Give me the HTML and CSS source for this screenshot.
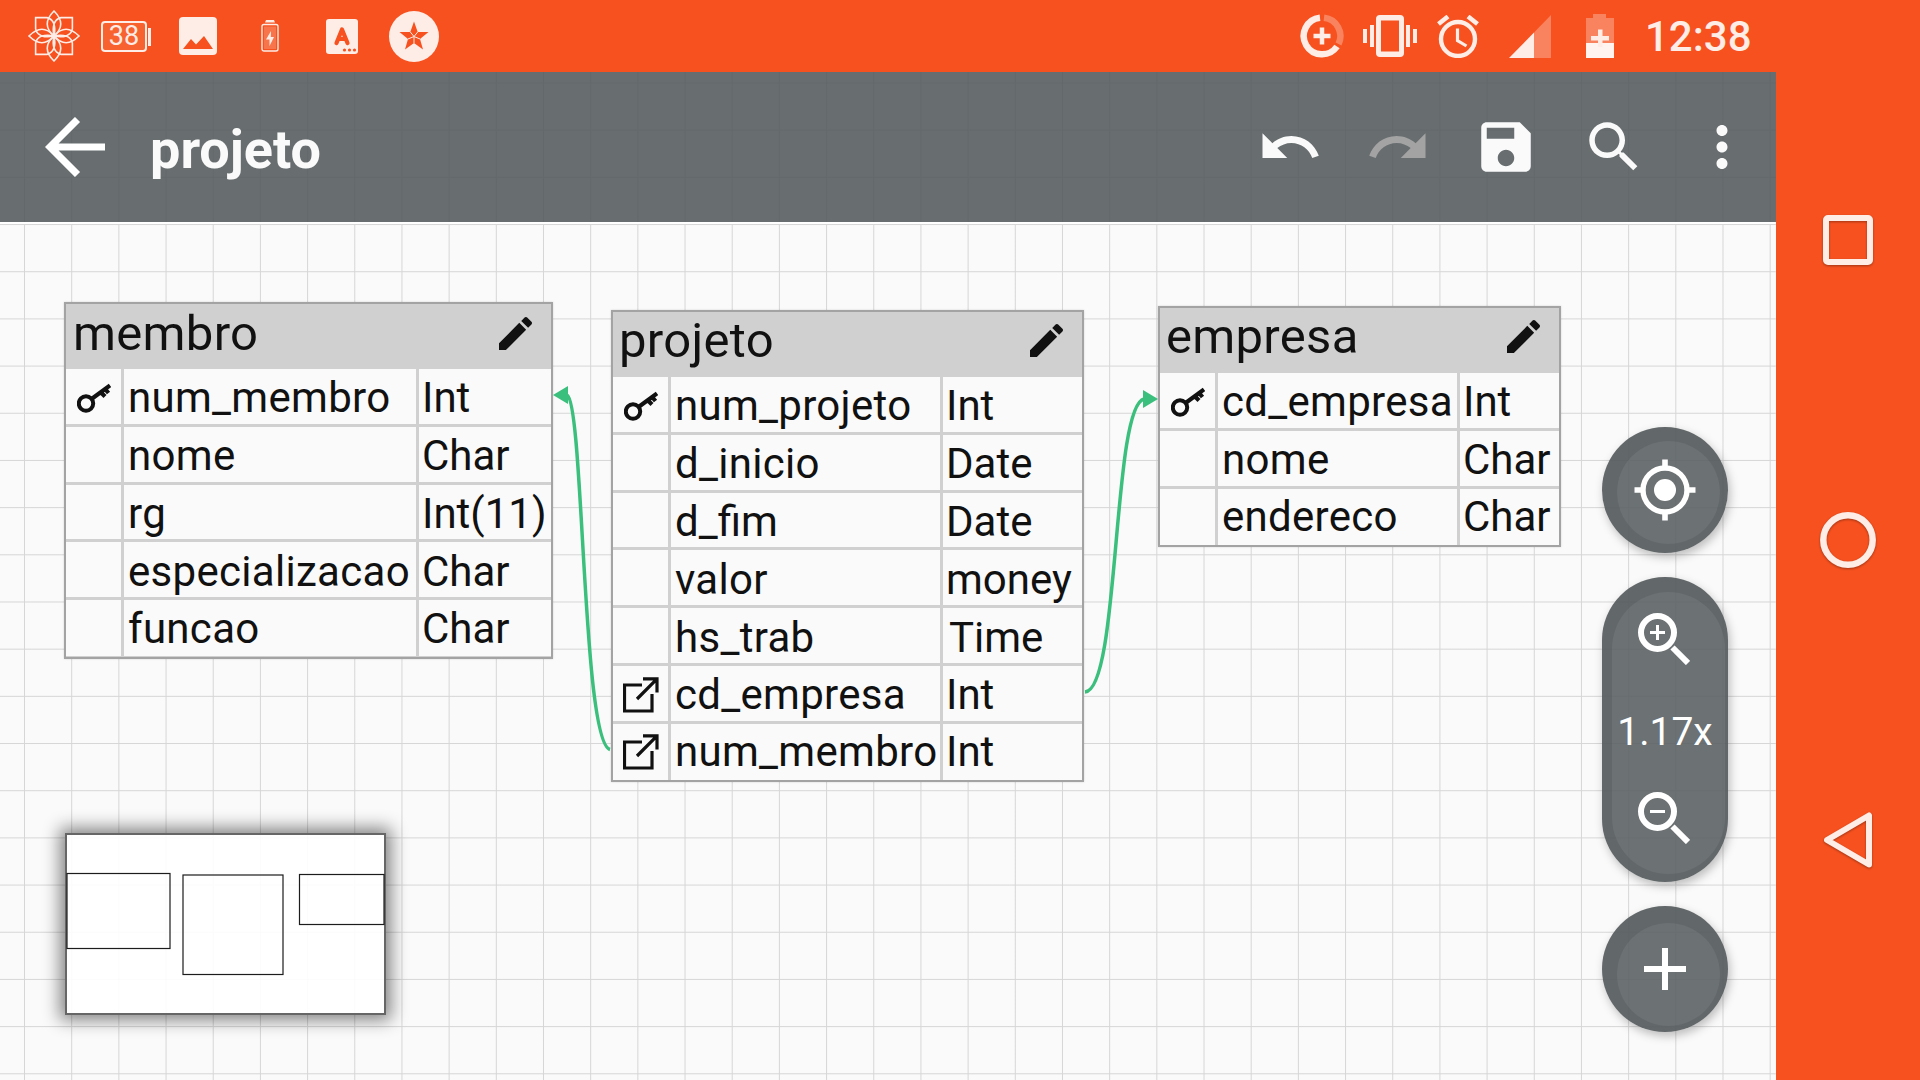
FILE: index.html
```html
<!DOCTYPE html>
<html lang="pt-BR">
<head>
<meta charset="utf-8">
<title>projeto</title>
<link rel="stylesheet" href="styles.css">
</head>
<body>
<main class="screen">
  <header class="status">
    <div class="notices">
      <svg class="n-flower" width="52" height="52" viewBox="-26 -26 52 52" fill="none" stroke="#feece6" stroke-width="1.6">
        <defs>
          <path id="petal" d="M0 0C-9 -8 -9 -16 0 -25C9 -16 9 -8 0 0Z"/>
          <path id="petal2" d="M0 0C-8 -5 -12 -12 -8 -18L0 -26L8 -18C12 -12 8 -5 0 0Z"/>
        </defs>
        <use href="#petal"/><use href="#petal" transform="rotate(90)"/><use href="#petal" transform="rotate(180)"/><use href="#petal" transform="rotate(270)"/>
        <use href="#petal2" transform="rotate(45)"/><use href="#petal2" transform="rotate(135)"/><use href="#petal2" transform="rotate(225)"/><use href="#petal2" transform="rotate(315)"/>
        <circle r="2" fill="#feece6"/>
      </svg>
      <div class="n-level"><span>38</span></div>
      <svg class="n-photo" width="38" height="38" viewBox="0 0 38 38"><rect width="38" height="38" rx="4" fill="#feece6"/><path d="M4 32L12 22L17 27.500L25 19L34 32Z" fill="#f6511f"/></svg>
      <svg class="n-charge" width="18" height="32" viewBox="0 0 18 32"><path d="M4 2.500L5 0H13L14 2.500Z" fill="#feece6"/><rect x="1" y="4.500" width="16" height="26.500" rx="2" fill="none" stroke="#feece6" stroke-width="1.400"/><rect x="3" y="6.500" width="12" height="22.500" fill="#f8754c"/><path d="M10 11L5 19.500H8.500V26L13 17H9.800Z" fill="#feece6"/></svg>
      <svg class="n-letter" width="32" height="35" viewBox="0 0 32 35"><rect width="32" height="35" rx="3" fill="#feece6"/><path d="M10.500 24L16 10.500L21.500 24M12.500 20H19.500" fill="none" stroke="#f6511f" stroke-width="4.200" stroke-linecap="round" stroke-linejoin="round"/><g fill="#f6511f"><circle cx="18.500" cy="31" r="1.600"/><circle cx="23.500" cy="31" r="1.600"/><circle cx="28.500" cy="31" r="1.600"/></g></svg>
      <svg class="n-star" width="50" height="51" viewBox="-25 -25.500 50 51"><ellipse rx="25" ry="25.500" fill="#feece6"/><path d="M0 -15L3.700 -4.500H14.500L6 2.500L9 13L0 6.500L-9 13L-6 2.500L-14.500 -4.500H-3.700Z" fill="#f6511f"/><path d="M0 0L3.700 -4.500M0 0L6 2.500M0 0V6.500M0 0L-6 2.500M0 0L-3.700 -4.500" stroke="#feece6" stroke-width="1"/></svg>
    </div>
    <div class="system">
      <svg class="s-data" width="44" height="44" viewBox="-22 -22 44 44" fill="none" stroke-width="6.500"><path d="M-2 -18.200A18.300 18.300 0 1 0 15 10.500" stroke="#feece6"/><path d="M2 -18.200A18.300 18.300 0 0 1 16.500 8" stroke="#f9835e"/><path d="M0 -8.500V8.500M-8.500 0H8.500" stroke="#feece6" stroke-width="4.500"/></svg>
      <svg class="s-vibrate" width="54" height="42" viewBox="0 0 54 42" fill="#feece6"><path fill-rule="evenodd" d="M17 0H37Q41 0 41 4V38Q41 42 37 42H17Q13 42 13 38V4Q13 0 17 0ZM18 5.500V36.500H36V5.500Z"/><path d="M0 14H4V28H0ZM7 10H11V32H7ZM43 10H47V32H43ZM50 14H54V28H50Z"/></svg>
      <svg class="s-alarm" width="42" height="43" viewBox="0 0 42 43" fill="none" stroke="#feece6"><circle cx="21" cy="24" r="17" stroke-width="4.400"/><path d="M20.500 13.500V25.500L29.500 31" stroke-width="3.200"/><path d="M1.500 9L11 1.500M31 1.500L40.500 9" stroke-width="4.600"/></svg>
      <svg class="s-signal" width="42" height="43" viewBox="0 0 42 43"><path d="M42 0V43H25V17.500Z" fill="#f9835e"/><path d="M0 43H25V17.500Z" fill="#feece6"/></svg>
      <svg class="s-battery" width="28" height="44" viewBox="0 0 28 44"><path d="M7 0H20V4H28V44H0V4H7Z" fill="#f9835e"/><path d="M0 29H28V44H0Z" fill="#fff4f0"/><path d="M12 15.500H16.500V22H23V26.500H16.500V33H12V26.500H5V22H12Z" fill="#feece6"/></svg>
      <time class="clock">12:38</time>
    </div>
  </header>

  <nav class="appbar">
    <svg class="back" width="60" height="60" viewBox="0 0 60 60" fill="none" stroke="#fff" stroke-width="7.200"><path d="M60 30H5M32.500 2.500L5 30L32.500 57.500"/></svg>
    <h1>projeto</h1>
    <div class="actions">
      <svg width="66" height="66" viewBox="0 0 24 24" fill="#fafafa"><path d="M12.500 8c-2.650 0-5.050.99-6.900 2.600L2 7v9h9l-3.620-3.620c1.390-1.160 3.160-1.880 5.120-1.880 3.540 0 6.550 2.310 7.600 5.500l2.370-.78C21.080 11.030 17.150 8 12.500 8z"/></svg>
      <svg width="66" height="66" viewBox="0 0 24 24" fill="#a3a3a3"><path d="M18.400 10.600C16.550 8.990 14.150 8 11.500 8c-4.650 0-8.580 3.030-9.960 7.220L3.900 16c1.050-3.190 4.050-5.500 7.600-5.500 1.950 0 3.730.72 5.120 1.880L13 16h9V7l-3.600 3.600z"/></svg>
      <svg width="66" height="66" viewBox="0 0 24 24" fill="#fafafa"><path d="M17 3H5c-1.110 0-2 .9-2 2v14c0 1.100.89 2 2 2h14c1.100 0 2-.9 2-2V7l-4-4zm-5 16c-1.660 0-3-1.340-3-3s1.340-3 3-3 3 1.340 3 3-1.340 3-3 3zm3-10H5V5h10v4z"/></svg>
      <svg width="66" height="66" viewBox="0 0 24 24" fill="#fafafa"><path d="M15.500 14h-.79l-.28-.27C15.410 12.590 16 11.110 16 9.500 16 5.910 13.090 3 9.500 3S3 5.910 3 9.500 5.910 16 9.500 16c1.610 0 3.090-.59 4.230-1.570l.27.28v.79l5 4.990L20.490 19l-4.990-5zm-6 0C7.010 14 5 11.990 5 9.500S7.010 5 9.500 5 14 7.010 14 9.500 11.990 14 9.500 14z"/></svg>
      <svg width="66" height="66" viewBox="0 0 24 24" fill="#fafafa"><path d="M12 8c1.100 0 2-.9 2-2s-.9-2-2-2-2 .9-2 2 .9 2 2 2zm0 2c-1.100 0-2 .9-2 2s.9 2 2 2 2-.9 2-2-.9-2-2-2zm0 6c-1.100 0-2 .9-2 2s.9 2 2 2 2-.9 2-2-.9-2-2-2z"/></svg>
    </div>
  </nav>

  <section class="canvas">
    <svg class="links" width="1776" height="858" viewBox="0 222 1776 858" fill="none" stroke="#3abf7c" stroke-width="3.500">
      <path d="M610 749.500C582 742 584 404 567 395"/><path d="M553 395L568 386V404Z" fill="#3abf7c" stroke="none"/>
      <path d="M1085 692C1120 690 1112 406 1144 399"/><path d="M1158 399L1143 390V408Z" fill="#3abf7c" stroke="none"/>
    </svg>

    <svg class="symbols" width="0" height="0">
      <symbol id="pencil" viewBox="3 3 18 18"><path fill="#111" d="M3 17.250V21h3.750L17.810 9.940l-3.750-3.750L3 17.250zM20.710 7.040c.39-.39.39-1.020 0-1.410l-2.340-2.340c-.39-.39-1.020-.39-1.410 0l-1.830 1.830 3.750 3.750 1.830-1.830z"/></symbol>
      <symbol id="key" viewBox="0 0 34 30"><circle cx="9" cy="20.500" r="7.200" fill="none" stroke="#111" stroke-width="4"/><path d="M14.500 16L33 2.500M24 9.500L28 13.500M28.500 6.500L31.500 10" fill="none" stroke="#111" stroke-width="4.200"/></symbol>
      <symbol id="foreign" viewBox="0 0 36 36"><path d="M19 8H1.500V34H29V17M20 1.800H34V15.500M34 1.800L14 22" fill="none" stroke="#111" stroke-width="3.200"/></symbol>
    </svg>

    <article class="table membro">
      <h2>membro<svg class="pencil"><use href="#pencil"/></svg></h2>
      <div class="rows">
        <i><svg class="key"><use href="#key"/></svg></i><span>num_membro</span><b>Int</b>
        <i></i><span>nome</span><b>Char</b>
        <i></i><span>rg</span><b>Int(11)</b>
        <i></i><span>especializacao</span><b>Char</b>
        <i></i><span>funcao</span><b>Char</b>
      </div>
    </article>
    <article class="table projeto">
      <h2>projeto<svg class="pencil"><use href="#pencil"/></svg></h2>
      <div class="rows">
        <i><svg class="key"><use href="#key"/></svg></i><span>num_projeto</span><b>Int</b>
        <i></i><span>d_inicio</span><b>Date</b>
        <i></i><span class="ligature">d_fim</span><b>Date</b>
        <i></i><span>valor</span><b>money</b>
        <i></i><span>hs_trab</span><b class="inset">Time</b>
        <i><svg class="foreign"><use href="#foreign"/></svg></i><span>cd_empresa</span><b>Int</b>
        <i><svg class="foreign"><use href="#foreign"/></svg></i><span>num_membro</span><b>Int</b>
      </div>
    </article>
    <article class="table empresa">
      <h2>empresa<svg class="pencil"><use href="#pencil"/></svg></h2>
      <div class="rows">
        <i><svg class="key"><use href="#key"/></svg></i><span>cd_empresa</span><b>Int</b>
        <i></i><span>nome</span><b>Char</b>
        <i></i><span>endereco</span><b>Char</b>
      </div>
    </article>

    <svg class="minimap" viewBox="67 835 317 178" fill="none" stroke="#1c1c1c" stroke-width="1.200">
      <rect x="67" y="873.500" width="103" height="75"/><rect x="183" y="875" width="100" height="99.500"/><rect x="299.500" y="874.500" width="84.500" height="50"/>
    </svg>

    <div class="controls">
      <button class="round"><svg width="62" height="62" viewBox="0 0 62 62" fill="none" stroke="#fff"><circle cx="31" cy="31" r="22" stroke-width="5.400"/><circle cx="31" cy="31" r="11" fill="#fff" stroke="none"/><path d="M31 .5V8M31 54V61.500M.5 31H8M54 31H61.500" stroke-width="5.600"/></svg></button>
      <div class="pill">
        <svg width="52" height="52" viewBox="0 0 52 52" fill="none" stroke="#fff"><circle cx="19.500" cy="19.500" r="16.500" stroke-width="6"/><path d="M34.500 34.500L50 50" stroke-width="6"/><path d="M12 19.500H27M19.500 12V27" stroke-width="3"/></svg>
        <span>1.17x</span>
        <svg width="52" height="52" viewBox="0 0 52 52" fill="none" stroke="#fff"><circle cx="19.500" cy="19.500" r="16.500" stroke-width="6"/><path d="M34.500 34.500L50 50" stroke-width="6"/><path d="M12 19.500H27" stroke-width="3"/></svg>
      </div>
      <button class="round add"><svg width="42" height="42" viewBox="0 0 42 42" stroke="#fff" stroke-width="6"><path d="M21 0V42M0 21H42"/></svg></button>
    </div>
  </section>
</main>

<aside class="navbar">
  <svg width="60" height="60" viewBox="0 0 60 60" fill="none" stroke="#feece6" stroke-width="6"><rect x="8" y="8" width="44" height="44" rx="2"/></svg>
  <svg width="60" height="60" viewBox="0 0 60 60" fill="none" stroke="#feece6" stroke-width="6.500"><circle cx="30" cy="30" r="24.700"/></svg>
  <svg width="60" height="60" viewBox="0 0 60 60" fill="none" stroke="#feece6" stroke-width="6" stroke-linejoin="round"><path d="M51 5.500V54.500L9 30Z"/></svg>
</aside>
</body>
</html>
```

FILE: styles.css
```css
* { box-sizing: border-box; }
body {
  margin: 0;
  width: 1920px;
  height: 1080px;
  overflow: hidden;
  display: flex;
  font-family: Roboto, "Liberation Sans", sans-serif;
}
svg { display: block; flex: none; }

.screen {
  width: 1776px;
  display: flex;
  flex-direction: column;
  background-color: #fafafa;
  background-image:
    repeating-linear-gradient(90deg, #d6d6d6 0, transparent 1px, transparent 46.18px, #d6d6d6 47.18px),
    repeating-linear-gradient(180deg, #d6d6d6 0, transparent 1px, transparent 46.18px, #d6d6d6 47.18px);
  background-position: -22.68px 0, 0 -11.36px;
  background-size: 1900px 1200px;
}

.status {
  height: 72px;
  background: #f6511f;
  color: #feece6;
  display: flex;
  justify-content: space-between;
  align-items: center;
  padding: 0 24px 0 28px;
}
.notices, .system { display: flex; align-items: center; }
.n-level {
  width: 46px;
  height: 31px;
  margin: 0 5px 0 21px;
  border: 2px solid #feece6;
  border-radius: 4px;
  background: #f7622f;
  display: flex;
  align-items: center;
  justify-content: center;
  position: relative;
  font-size: 27px;
}
.n-level::after {
  content: "";
  position: absolute;
  left: 45px;
  top: 5px;
  width: 3px;
  height: 18px;
  background: #feece6;
}
.n-photo { margin-left: 27px; }
.n-charge { margin-left: 44px; }
.n-letter { margin-left: 47px; }
.n-star { margin-left: 31px; }
.s-vibrate { margin-left: 19px; }
.s-alarm { margin-left: 20px; }
.s-signal { margin-left: 30px; }
.s-battery { margin-left: 35px; }
.clock {
  margin-left: 31px;
  width: 107px;
  font-size: 42px;
  font-weight: 500;
  white-space: nowrap;
}

.appbar {
  height: 150px;
  background: rgba(83, 90, 92, 0.88);
  display: flex;
  align-items: center;
  padding: 0 21px 0 45px;
  box-shadow: 0 2px 0 #fff;
}
.appbar h1 {
  margin: 4px 0 0 45px;
  color: #fafafa;
  font-size: 54px;
  font-weight: 700;
}
.actions { margin-left: auto; display: flex; align-items: center; gap: 42px; }

.canvas { flex: 1; position: relative; }
.links, .symbols { position: absolute; left: 0; top: 0; }

.table {
  position: absolute;
  border: 2px solid #a3a3a3;
  background: #d0d0d0;
  box-shadow: 0 0 2px rgba(0, 0, 0, 0.15);
  color: #111;
  display: flex;
  flex-direction: column;
}
.membro { left: 64px; top: 80px; width: 489px; height: 357px; --name: 292px; }
.projeto { left: 611px; top: 88px; width: 473px; height: 472px; --name: 269px; }
.empresa { left: 1158px; top: 84px; width: 403px; height: 241px; --name: 239px; }
.table h2 {
  margin: 0;
  height: 65px;
  padding: 0 19px 7px 7px;
  display: flex;
  flex: none;
  align-items: center;
  justify-content: space-between;
  font-size: 49px;
  font-weight: 400;
  letter-spacing: 0.3px;
}
.projeto h2, .empresa h2 { padding: 0 19px 9px 6px; }
.pencil { width: 33px; height: 33px; }
.rows {
  flex: 1;
  min-height: 0;
  display: grid;
  grid-template-columns: 55px var(--name) 1fr;
  grid-auto-rows: 54.800px;
  gap: 3px;
}
.rows > * { background: #fafafa; display: flex; align-items: center; }
.rows > :nth-last-child(-n+3) { margin-bottom: -1.400px; }
.rows i { padding: 3px 0 0 11px; }
.rows span, .rows b {
  padding: 4px 0 0 4px;
  font-size: 42px;
  font-weight: 400;
  line-height: 50px;
  white-space: nowrap;
}
.rows > :nth-last-child(-n+3) { padding-top: 1px; }
.rows b { padding-left: 3px; }
.rows span { letter-spacing: 0.3px; }
.rows .ligature { letter-spacing: 0; }
.rows .inset { padding-left: 6px; }
.key { width: 34px; height: 30px; }
.foreign { width: 36px; height: 36px; margin-left: -1px; }

.minimap {
  position: absolute;
  left: 65px;
  top: 611px;
  width: 321px;
  height: 182px;
  overflow: visible;
  background: rgba(255, 255, 255, 0.9);
  border: 2px solid #666;
  box-shadow: 0 0 16px 5px rgba(0, 0, 0, 0.48);
}

.controls {
  position: absolute;
  right: 48px;
  top: 205px;
  width: 126px;
  display: flex;
  flex-direction: column;
  gap: 24px;
}
.round, .pill {
  position: relative;
  overflow: hidden;
  display: flex;
  align-items: center;
  justify-content: center;
  padding: 0;
  border: 0;
  border-radius: 63px;
  background: rgba(92, 98, 100, 0.9);
  box-shadow: 2px 4px 10px rgba(0, 0, 0, 0.25);
}
.round { height: 126px; }
.pill {
  height: 305px;
  flex-direction: column;
  justify-content: space-between;
  padding: 36px 2px 38px 0;
}
.pill span { padding-left: 2px; margin-top: 7px; color: #fff; font-size: 39px; line-height: 46px; }
.round::before, .pill::before {
  content: "";
  position: absolute;
  left: 15px;
  top: 14px;
  width: 103px;
  height: 103px;
  border-radius: 60px;
  box-shadow: 0 0 0 40px rgba(60, 66, 68, 0.2);
}
.pill::before { left: 10px; top: 15px; width: 113px; height: 282px; }
.add::before { top: 17px; }

.navbar {
  width: 144px;
  background: #f6511f;
  display: flex;
  flex-direction: column;
  align-items: center;
  justify-content: center;
  gap: 240px;
}
.navbar svg { filter: drop-shadow(0 1px 1px rgba(0, 0, 0, 0.35)); }
```
